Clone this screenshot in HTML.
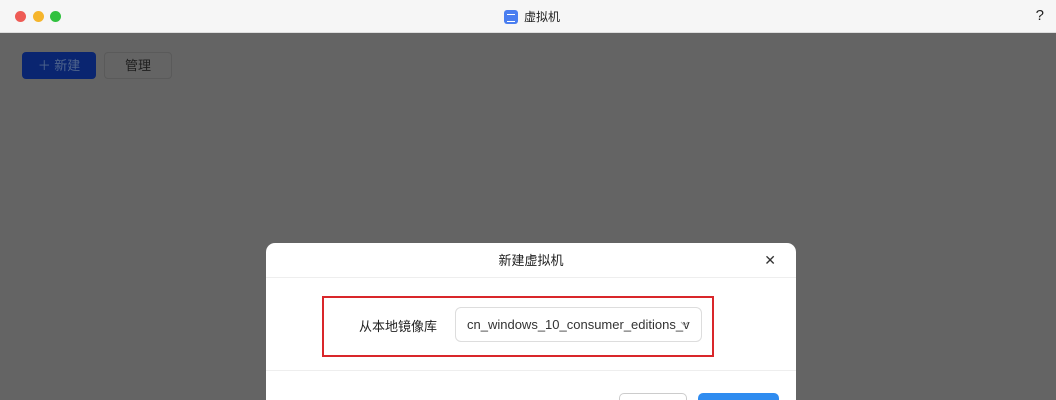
<!DOCTYPE html>
<html><head><meta charset="utf-8"><style>
*{margin:0;padding:0;box-sizing:border-box}
html,body{width:1056px;height:400px;overflow:hidden}
body{position:relative;background:#646464;font-family:"Liberation Sans","Noto Sans CJK SC",sans-serif}
.title{position:absolute;left:0;top:0;width:1056px;height:33px;background:#f6f6f6;border-bottom:1px solid #ddd}
.dot{position:absolute;top:11px;width:11px;height:11px;border-radius:50%}
.t{position:absolute;left:504px;top:8px;font-size:12px;color:#222;display:flex;align-items:center;gap:6px}
.ic{width:14px;height:14px;border-radius:3px;background:#4a7ef0;position:relative}
.ic:after{content:"";position:absolute;left:3px;top:4px;width:8px;height:6px;border-top:1px solid #fff;border-bottom:1px solid #fff}
.btn1{position:absolute;left:22px;top:52px;width:74px;height:27px;border-radius:4px;background:#0a2570;color:#50658c;font-size:13px;line-height:27px;text-align:center}
.btn2{position:absolute;left:104px;top:52px;width:68px;height:27px;border-radius:4px;border:1px solid #5a5a5a;color:#1e1e1e;font-size:13px;line-height:25px;text-align:center}
.dlg{position:absolute;left:266px;top:243px;width:530px;height:157px;background:#fff;border-radius:9px 9px 0 0;overflow:hidden}
.hd{height:35px;border-bottom:1px solid #eee;text-align:center;line-height:35px;font-size:13px;color:#222;position:relative}
.x{position:absolute;right:20px;top:0;font-size:14px;color:#333}
.red{position:absolute;left:56px;top:53px;width:392px;height:61px;border:2px solid #d9262a}
.lbl{position:absolute;left:93px;top:73px;font-size:13px;color:#222}
.sel{position:absolute;left:189px;top:64px;width:247px;height:35px;border:1px solid #ddd;border-radius:6px;font-size:13px;color:#333;line-height:33px;padding-left:11px;white-space:nowrap;overflow:hidden}
.sep{position:absolute;left:0;top:127px;width:530px;border-top:1px solid #eee}
.c{position:absolute;left:353px;top:150px;width:68px;height:7px;border:1px solid #ccc;border-bottom:none;border-radius:5px 5px 0 0}
.o{position:absolute;left:432px;top:150px;width:81px;height:7px;background:#2f8cf0;border-radius:5px 5px 0 0}
</style></head><body>
<div class="title">
<div class="dot" style="left:15px;background:#ee5b55"></div>
<div class="dot" style="left:33px;background:#f5b52c"></div>
<div class="dot" style="left:50px;background:#31c13f"></div>
<div class="t"><div class="ic"></div>虚拟机</div>
<div style="position:absolute;right:12px;top:7px;font-size:15px;color:#222">?</div>
</div>
<div class="btn1">＋ 新建</div>
<div class="btn2">管理</div>
<div class="dlg">
<div class="hd">新建虚拟机<span class="x">✕</span></div>
<div class="red"></div>
<div class="lbl">从本地镜像库</div>
<div class="sel">cn_windows_10_consumer_editions_v<svg style="position:absolute;left:224px;top:13px" width="9" height="6" viewBox="0 0 9 6"><path d="M1 1L4.5 4.5L8 1" fill="none" stroke="#aaa"/></svg></div>
<div class="sep"></div>
<div class="c"></div><div class="o"></div>
</div>
</body></html>
